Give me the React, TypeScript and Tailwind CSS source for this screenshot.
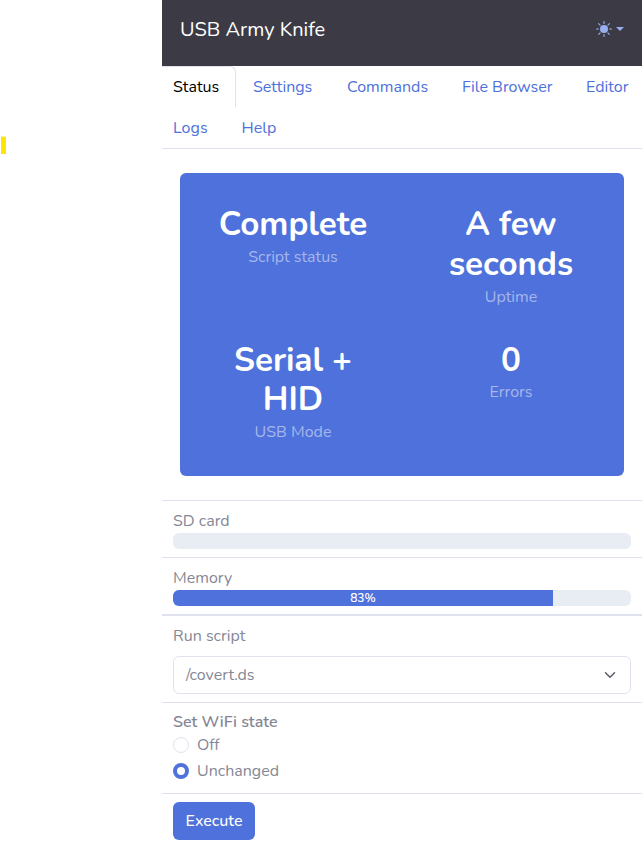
import React from "react";

const tabs = [
  { label: "Settings", box: "w-[94px]" },
  { label: "Commands", box: "w-[115px]" },
  { label: "File Browser", box: "w-[124px]" },
  { label: "Editor", box: "w-[56px]" },
];

function Stat({ lines, caption, leading, gap }: { lines: string[]; caption: string; leading: string; gap: string }) {
  return (
    <div className="text-center">
      <div className={"text-[33.2px] font-bold text-white " + leading}>
        {lines.map((line, i) => (
          <React.Fragment key={line}>
            {i > 0 && <br />}
            {line}
          </React.Fragment>
        ))}
      </div>
      <div className={"text-[16px] leading-6 text-[#a6b7ec] " + gap}>{caption}</div>
    </div>
  );
}

function Sun() {
  return (
    <svg width="16" height="16" viewBox="0 0 16 16" fill="#98aeee">
      <circle cx="8" cy="8" r="4" />
      <g stroke="#98aeee" strokeWidth="1.1" strokeLinecap="round">
        <path d="M8 .5v2M8 13.5v2M.5 8h2M13.5 8h2M2.7 2.7l1.4 1.4M11.9 11.9l1.4 1.4M2.7 13.3l1.4-1.4M11.9 4.1l1.4-1.4" />
      </g>
    </svg>
  );
}

export default function App() {
  return (
    <div className="flex h-[846px] w-[642px] overflow-hidden bg-white font-[Nunito,Lato,sans-serif] text-[16px] leading-6 text-[#858796]">
      <aside className="w-[162px] shrink-0 pt-[136px]">
        <div className="ml-px h-[18px] w-[5px] border-t border-[#fff6a0] bg-[#ffe500]" />
      </aside>
      <main className="w-[480px] shrink-0">
        <header className="flex h-[66px] items-start justify-between bg-[#3c3b45] px-[18px] pt-[14px]">
          <h1 className="pt-px text-[20px] leading-[30px] text-white">USB Army Knife</h1>
          <div className="flex h-[30px] items-center gap-[4px]">
            <Sun />
            <svg width="8" height="4" viewBox="0 0 8 4">
              <path d="M0 0h8L4 4z" fill="#98aeee" />
            </svg>
          </div>
        </header>

        <nav className="h-[83px] border-b border-[#e1e2ef] text-[#4e71db]">
          <div className="flex h-[41px] leading-[43px]">
            <div className="mr-[17px] w-[74px] shrink-0 rounded-tr-[6px] border-r border-t border-[#e1e2ef] pl-[11px] leading-[41px] text-black">
              Status
            </div>
            {tabs.map((t) => (
              <a key={t.label} className={"shrink-0 whitespace-nowrap " + t.box}>
                {t.label}
              </a>
            ))}
          </div>
          <div className="flex h-[41px] pl-[11px] leading-[43px]">
            <a className="w-[68.5px]">Logs</a>
            <a>Help</a>
          </div>
        </nav>

        <section className="mx-[18px] mt-[24px] grid h-[303px] grid-cols-2 grid-rows-[137px_135px] rounded-[6px] bg-[#4e71db] px-1 pt-[31px]">
          <Stat lines={["Complete"]} caption="Script status" leading="leading-[40px]" gap="mt-px" />
          <Stat lines={["A few", "seconds"]} caption="Uptime" leading="leading-[40px]" gap="mt-px" />
          <Stat lines={["Serial +", "HID"]} caption="USB Mode" leading="leading-[39px]" gap="mt-px" />
          <Stat lines={["0"]} caption="Errors" leading="leading-[39px]" gap="mt-0" />
        </section>

        <div className="mt-[24px] h-[57px] border-t border-[#e1e2ef] px-[11px] pt-2">
          <div>SD card</div>
          <div className="h-4 rounded-[6px] bg-[#e8ecf3]" />
        </div>
        <div className="h-[57px] border-t border-[#e1e2ef] px-[11px] pt-2">
          <div>Memory</div>
          <div className="h-4 overflow-hidden rounded-[6px] bg-[#e8ecf3]">
            <div className="h-4 w-[380px] bg-[#4e71db] text-center text-[12px] font-semibold leading-4 text-white">83%</div>
          </div>
        </div>
        <div className="h-[88px] border-t-2 border-[#e1e2ef] px-[11px] pt-2">
          <div>Run script</div>
          <div className="mt-2 flex h-[38px] items-center justify-between rounded-[6px] border border-[#e1e2ef] pl-3 pr-[14px]">
            <span>/covert.ds</span>
            <svg width="12" height="12" viewBox="0 0 16 16" fill="none" stroke="#5a5c69" strokeWidth="2" strokeLinecap="round" strokeLinejoin="round">
              <path d="m2 5 6 6 6-6" />
            </svg>
          </div>
        </div>
        <div className="h-[91px] border-t border-[#e1e2ef] px-[11px] pt-[7px]">
          <div className="h-[23px] font-semibold">Set WiFi state</div>
          <div className="flex h-6 items-center gap-2">
            <span className="h-4 w-4 rounded-full border border-[#e1e2ef]" />
            <span>Off</span>
          </div>
          <div className="mt-[2px] flex h-6 items-center gap-2">
            <span className="h-4 w-4 rounded-full border-4 border-[#4e71db]" />
            <span>Unchanged</span>
          </div>
        </div>
        <div className="border-t border-[#e1e2ef] pl-[11px] pt-2">
          <button className="h-[38px] w-[82px] rounded-[6px] bg-[#4e71db] font-medium text-white">Execute</button>
        </div>
      </main>
    </div>
  );
}
